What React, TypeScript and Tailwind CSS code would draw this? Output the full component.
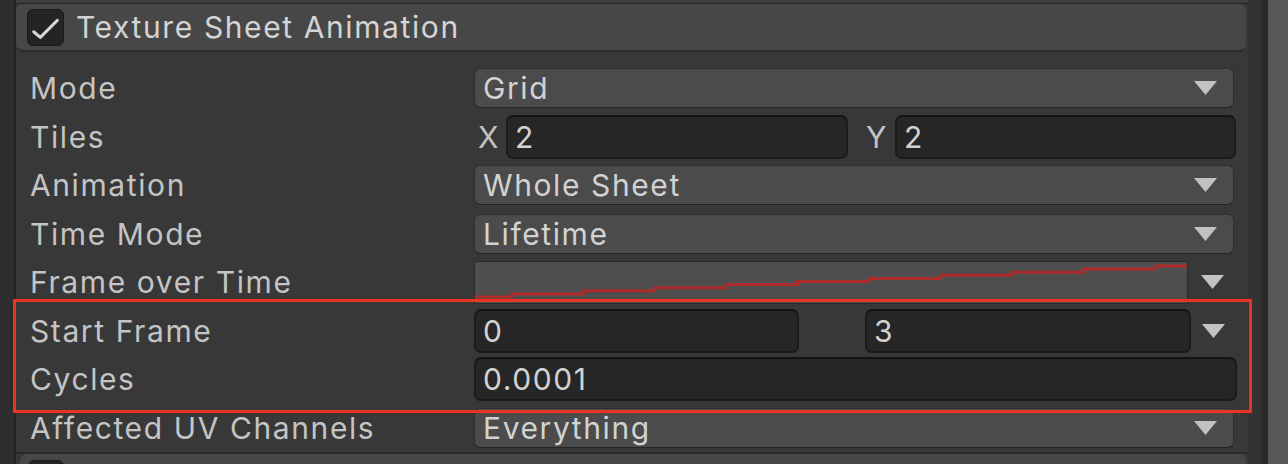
import React from "react";

const Tri = () => (
  <svg width="23" height="14" viewBox="0 0 23 14" className="shrink-0">
    <polygon points="0,0 23,0 11.5,14" fill="#c2c2c2" />
  </svg>
);

const txt = "text-[30px] tracking-[1.6px] leading-none";

const Label = ({ children }: { children: React.ReactNode }) => (
  <div className={`w-[444px] shrink-0 text-[#c4c4c4] ${txt}`}>{children}</div>
);

const Dropdown = ({ value }: { value: string }) => (
  <div className="w-[760px] h-[40px] rounded-[6px] bg-[#4b4b4b] border border-[#2e2e2e] border-b-[#232323] flex items-center justify-between pl-[8px] pr-[16px]">
    <span className={`text-[#d2d2d2] ${txt}`}>{value}</span>
    <Tri />
  </div>
);

const Field = ({ value, w }: { value: string; w: string }) => (
  <div className={`${w} h-[44px] rounded-[7px] bg-[#262626] border-[2px] border-[#1b1b1b] border-t-[#141414] flex items-center pl-[7px] shrink-0`}>
    <span className={`text-[#d2d2d2] ${txt}`}>{value}</span>
  </div>
);

const Row = ({ children }: { children: React.ReactNode }) => (
  <div className="h-[48.5px] shrink-0 flex items-center pl-[14px]">{children}</div>
);

function Curve() {
  const steps = 10;
  const x0 = 37;
  const w = 71.4;
  const pts: string[] = [];
  let y = 35;
  pts.push(`0,${y}`);
  for (let i = 0; i <= steps; i++) {
    const x = x0 + i * w;
    pts.push(`${x},${y}`);
    y -= 3.1;
    pts.push(`${x},${y}`);
  }
  pts.push(`714,${y}`);
  return (
    <div className="w-[714px] h-[43px] bg-[#4e4e4e] border border-[#2a2a2a] shrink-0 overflow-hidden">
      <svg width="714" height="43" viewBox="0 0 714 43">
        <polyline points={pts.join(" ")} fill="none" stroke="#ad2b2b" strokeWidth="3" />
      </svg>
    </div>
  );
}

export default function App() {
  return (
    <div
      className="w-[1288px] h-[464px] overflow-hidden flex bg-[#383838] relative"
      style={{ fontFamily: "Inter, 'Noto Sans', sans-serif" }}
    >
      <div className="w-[14px] bg-[#2d2d2d] shrink-0" />
      <div className="w-[2px] bg-[#232323] shrink-0" />
      <div className="w-[1232px] shrink-0 flex flex-col">
        <div className="h-[3px] shrink-0 bg-[#3f3f3f]" />
        <div className="h-[1px] shrink-0 bg-[#262626]" />
        <div className="w-[1230px] h-[48px] shrink-0 rounded-[7px] bg-[#474747] border-b-[2px] border-[#2c2c2c] flex items-center pl-[11px] gap-[12px]">
          <div className="w-[37px] h-[37px] rounded-[6px] bg-[#242424] border border-[#1a1a1a] flex items-center justify-center">
            <svg width="37" height="37" viewBox="0 0 37 37">
              <polyline points="6,23 13,29 31,11" fill="none" stroke="#d6d6d6" strokeWidth="3.2" strokeLinecap="round" strokeLinejoin="round" />
            </svg>
          </div>
          <span className={`text-[#d4d4d4] ${txt}`}>Texture Sheet Animation</span>
        </div>
        <div className="h-[12px] shrink-0" />
        <Row>
          <Label>Mode</Label>
          <Dropdown value="Grid" />
        </Row>
        <Row>
          <Label>Tiles</Label>
          <div className="flex items-center">
            <span className={`w-[32px] pl-[4px] text-[#c4c4c4] ${txt}`}>X</span>
            <Field value="2" w="w-[342px]" />
            <span className={`w-[29px] ml-[18px] text-[#c4c4c4] ${txt}`}>Y</span>
            <Field value="2" w="w-[341px]" />
          </div>
        </Row>
        <Row>
          <Label>Animation</Label>
          <Dropdown value="Whole Sheet" />
        </Row>
        <Row>
          <Label>Time Mode</Label>
          <Dropdown value="Lifetime" />
        </Row>
        <Row>
          <Label>Frame over Time</Label>
          <div className="flex items-center">
            <Curve />
            <div className="w-[48px] flex justify-center">
              <Tri />
            </div>
          </div>
        </Row>
        <Row>
          <Label>Start Frame</Label>
          <div className="flex items-center">
            <Field value="0" w="w-[325px]" />
            <div className="w-[66px]" />
            <Field value="3" w="w-[326px]" />
            <div className="w-[45px] flex justify-center">
              <Tri />
            </div>
          </div>
        </Row>
        <Row>
          <Label>Cycles</Label>
          <Field value="0.0001" w="w-[763px]" />
        </Row>
        <Row>
          <Label>Affected UV Channels</Label>
          <Dropdown value="Everything" />
        </Row>
        <div className="h-[2px] shrink-0 bg-[#2a2a2a]" />
        <div className="ml-[4px] w-[1226px] flex-1 rounded-t-[7px] bg-[#474747] pl-[8px] pt-[6px]">
          <div className="w-[36px] h-[36px] rounded-[6px] bg-[#242424] border border-[#1a1a1a]" />
        </div>
      </div>
      <div className="w-[14px] bg-[#323232] shrink-0" />
      <div className="w-[6px] bg-[#2a2a2a] shrink-0" />
      <div className="w-[20px] bg-[#585858] shrink-0" />
      <div className="absolute left-[13px] top-[299px] w-[1239px] h-[114px] border-[3px] border-[#ec3424]" />
    </div>
  );
}
